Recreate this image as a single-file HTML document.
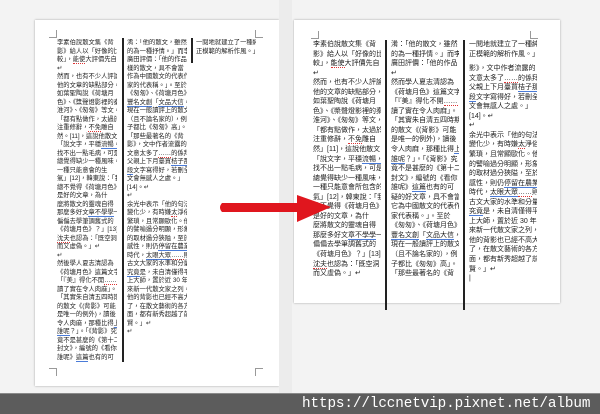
<!DOCTYPE html>
<html><head><meta charset="utf-8"><style>
*{margin:0;padding:0;box-sizing:border-box}
body{width:600px;height:414px;background:#f3f3f3;position:relative;overflow:hidden;font-family:"Liberation Sans","Noto Sans CJK TC",sans-serif}
.page{position:absolute;background:#fff;box-shadow:0 0 2px rgba(0,0,0,.35)}
.col{position:absolute;color:#222;white-space:nowrap;overflow:hidden}
.l .col{font-size:6.3px;width:60px}
.l .col div{height:8.5px;line-height:8.5px}
.r .col{font-size:7px;width:68px}
.r .col div{height:9.55px;line-height:9.55px}
.sep{position:absolute;width:1.5px;background:#222}
.cm{position:absolute;border-color:#999;border-style:solid;width:8px;height:8px}
.u{border-bottom:1px solid #4a7bd8}
.w{border-bottom:1px dotted #d33}
</style></head><body>
<div class="page l" style="left:35px;top:20px;width:244px;height:366px">
<div class="cm" style="left:14px;top:10px;border-width:0 1px 1px 0"></div>
<div class="cm" style="left:220px;top:10px;border-width:0 0 1px 1px"></div>
<div class="cm" style="left:14px;top:348px;border-width:1px 1px 0 0"></div>
<div class="cm" style="left:220px;top:348px;border-width:1px 0 0 1px"></div>
<div class="col" style="left:22px;top:19px">
<div>李素伯說散文集《背</div><div>影》給人以「好像的比</div><div>較」，<span class="w">能使</span>大評價先自</div><div>↵</div>
<div>然而，也有不少人評論</div><div>他的文章的缺點部分，例</div><div>如葉聖陶說《荷塘月</div><div>色》、《槳聲燈影裡的秦</div><div>淮河》、《匆匆》等文，</div><div>「都有點做作，太過於</div><div>注重修辭，<span class="w">不免</span>雕自</div><div>然。[11]，這說他散文</div><div>「說文字，平穩<span class="u">流暢，</span></div><div>找不出一點毛病，可是</div><div>總覺得缺少一種風味，</div><div>一種只能意會的生</div><div>氣」[12]，韓東說：「我</div><div>總不覺得《荷塘月色》</div><div>是好的文章，為什</div><div>麼將散文的靈魂自得</div><div>那麼多好文<span class="u">章不學學</span>一</div><div>偏偏去學筆調舊式的</div><div>《荷塘月色》？」[13]</div><div><span class="w">沈夫</span>也認為：「既空洞</div><div>而又虛偽。」↵</div><div>↵</div>
<div>然後學人夏志清認為</div><div>《荷塘月色》這篇文字</div><div>「『美』得化不開<span class="w">……</span></div><div>讀了實在令人肉麻」。</div><div>「其實朱自清五四時期</div><div>的散文《(背影》可能</div><div>是唯一的例外)，讀後</div><div>令人肉麻，那種比得<span class="u">上</span></div><div><span class="u">誰呢</span>？」。「《背影》究</div><div>竟不是甚麼的《第十二</div><div>封文》，編號的《看你</div><div>誰呢》<span class="u">這篇</span>也有的可</div>
</div>
<div class="sep" style="left:87px;top:18px;height:324px"></div>
<div class="col" style="left:92px;top:19px">
<div>淆：「他的散文，雖然</div><div>的為一種抒情。」而李</div><div>廣田評價：「他的作品</div><div>樣的散文，具不會當</div><div>作為中國散文的代表作</div><div>家的代表稱。」。至於</div><div>《匆匆》、《荷塘月色》</div><div><span class="u">豐名文創</span>「<span class="u">文品大信</span>，</div><div>現在一般讀評上的散文</div><div>（且不論名家的），例</div><div>子都比《匆匆》高」。</div><div>「那些最著名的《背</div><div>影》，文中作者流露的</div><div>文意太多了<span class="w">……</span>的係拜</div><div>父親上下月臺買<span class="u">桔子那</span></div><div><span class="u">段</span>文字寫得好，若刪全</div><div>文會無感人之處。」</div><div>[14]。↵</div><div>↵</div>
<div>余光中表示「他的句法</div><div>變化少，有時嫌<span class="w">太</span>淨俗</div><div>繁瑣，且常顯歐化。他</div><div>的譬喻過分明顯，形象</div><div>的取材過分狹隘，至於</div><div>感性，則仍<span class="u">停留在農業</span></div><div>時代，<span class="u">太眼大眾</span><span class="w">……</span>則</div><div>古文大家的水準和分量</div><div><span class="u">究竟</span>是，未自清僅得平</div><div>上大師，置於近 30 年</div><div>來新一代散文家之列，</div><div>他的背影也已經不高大</div><div>了，在散文藝術的各方</div><div>面，都有新秀超越了前</div><div>賢。」↵</div><div>↵</div>
</div>
<div class="sep" style="left:156px;top:18px;height:25px"></div>
<div class="col" style="left:161px;top:19px">
<div>一閱地就建立了一種純</div><div>正模範的解析作風。」↵</div>
</div>
</div>

<div style="position:absolute;left:279px;top:0;width:13px;height:393px;background:#ececec"></div>

<div class="page r" style="left:294px;top:20px;width:266px;height:283px">
<div class="cm" style="left:17px;top:11px;border-width:0 1px 1px 0"></div>
<div class="cm" style="left:236px;top:11px;border-width:0 0 1px 1px"></div>
<div class="col" style="left:19px;top:20px">
<div>李素伯說散文集《背</div><div>影》給人以「好像的比</div><div>較」，<span class="w">能使</span>大評價先自</div><div>↵</div>
<div>然而，也有不少人評論</div><div>他的文章的缺點部分，例</div><div>如葉聖陶說《荷塘月</div><div>色》、《槳聲燈影裡的秦</div><div>淮河》、《匆匆》等文，</div><div>「都有點做作，太過於</div><div>注重修辭，<span class="w">不免</span>雕自</div><div>然」[11]，這說他散文</div><div>「說文字，平穩<span class="u">流暢，</span></div><div>找不出一點毛病，可是</div><div>總覺得缺少一種風味，</div><div>一種只能意會所包含的生</div><div>氣」[12]，韓東說：「我</div><div>總不覺得《荷塘月色》</div><div>是好的文章，為什</div><div>麼將散文的靈魂自得</div><div>那麼多好文<span class="u">章不學學</span>一</div><div>偏偏去學筆調舊式的</div><div>《荷塘月色》？」[13]</div><div><span class="w">沈夫</span>也認為：「既空洞</div><div>而又虛偽。」↵</div>
</div>
<div class="sep" style="left:91px;top:20px;height:270px"></div>
<div class="col" style="left:97px;top:20px">
<div>淆：「他的散文，雖然</div><div>的為一種抒情。」而李</div><div>廣田評價：「他的作品</div><div>↵</div>
<div>然而學人夏志清認為</div><div>《荷塘月色》這篇文字</div><div>「『美』得化不開<span class="w">……</span></div><div>讀了實在令人肉麻」。</div><div>「其實朱自清五四時期</div><div>的散文《(背影》可能</div><div>是唯一的例外)，讀後</div><div>令人肉麻，那種比得<span class="u">上</span></div><div><span class="u">誰呢</span>？」。「《背影》究</div><div>竟不是甚麼的《第十二</div><div>封文》，編號的《看你</div><div>誰呢》<span class="u">這篇</span>也有的可</div><div>疑的好文章，具不會當</div><div>它為中國散文的代表作</div><div>家代表稱。」。至於</div><div>《匆匆》、《荷塘月色》</div><div><span class="u">豐名文創</span>「<span class="u">文品大信</span>，</div><div>現在一般讀評上的散文</div><div>（且不論名家的），例</div><div>子都比《匆匆》高」。</div><div>「那些最著名的《背</div>
</div>
<div class="sep" style="left:169px;top:20px;height:270px"></div>
<div class="col" style="left:175px;top:20px">
<div>一閱地就建立了一種純</div><div>正模範的解析作風。」↵</div><div style="height:5px"></div>
<div>影》，文中作者流露的</div><div>文意太多了<span class="w">……</span>的係拜</div><div>父親上下月臺買<span class="u">桔子那</span></div><div><span class="u">段</span>文字寫得好，若刪全</div><div>文會無感人之處。」</div><div>[14]。↵</div><div>↵</div>
<div>余光中表示「他的句法</div><div>變化少，有時嫌<span class="w">太</span>淨俗</div><div>繁瑣，且常顯歐化。他</div><div>的譬喻過分明顯，形象</div><div>的取材過分狹隘，至於</div><div>感性，則仍<span class="u">停留在農業</span></div><div>時代，<span class="u">太眼大眾</span><span class="w">……</span>則</div><div>古文大家的水準和分量</div><div><span class="u">究竟</span>是，未自清僅得平</div><div>上大師，置於近 30 年</div><div>來新一代散文家之列，</div><div>他的背影也已經不高大</div><div>了，在散文藝術的各方</div><div>面，都有新秀超越了前</div><div>賢。」↵</div><div>|</div>
</div>
</div>

<svg style="position:absolute;left:0;top:0" width="600" height="414">
<path d="M222,203 L297,203 L297,195 L331,207 L297,222 L297,212 L222,212 Q218,207.5 222,203 Z" fill="#e0161e"/>
</svg>

<div style="position:absolute;left:0;top:393px;width:600px;height:21px;background:#5c5c5c;border-top:1px solid #8a8a8a"></div>
<div style="position:absolute;left:302px;top:396px;font-family:'Liberation Mono',monospace;font-size:14.3px;color:#fff;letter-spacing:-0.1px;white-space:nowrap">https://lccnetvip.pixnet.net/album</div>
</body></html>
